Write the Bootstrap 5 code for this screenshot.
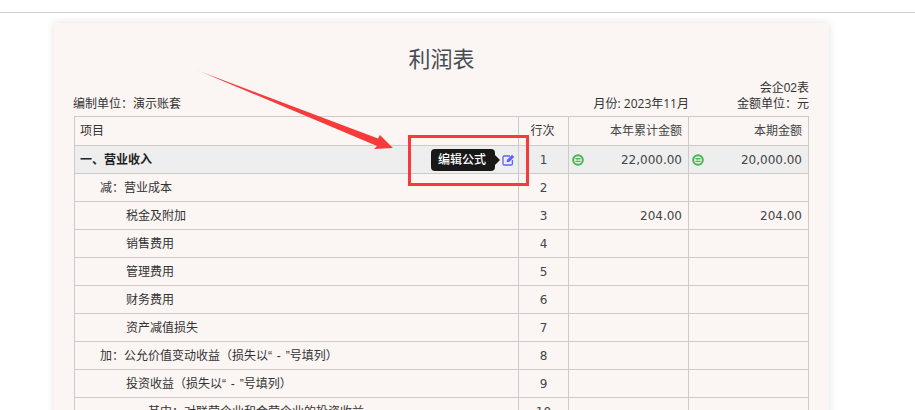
<!DOCTYPE html>
<html lang="zh">
<head>
<meta charset="utf-8">
<title>利润表</title>
<link href="https://cdn.jsdelivr.net/npm/bootstrap@5.3.0/dist/css/bootstrap.min.css" rel="stylesheet">
<style>
html,body{height:410px;overflow:hidden;background:#fff}
body{font-family:"Liberation Sans","Noto Sans CJK SC",sans-serif;font-size:12px;color:#333;position:relative}
.topbar{height:13px;border-bottom:1px solid #d0d0d0}
.sheet{width:775px;height:500px;margin:10px 0 0 54px;background:#fbf6f4;box-shadow:0 0 8px rgba(0,0,0,.12);padding:20px 20px 0 20px}
.sheet-title{font-size:22px;line-height:34px;color:#464c54;text-align:center;margin:0 0 3px;font-weight:400}
.meta{height:37px;margin-bottom:-1px;line-height:16px;color:#333}
.meta-left{width:518px;align-self:flex-end;padding-bottom:5px;margin-left:-1px}
.meta-mid{width:98px;align-self:flex-end;text-align:right;padding-bottom:5px;font-family:"Open Sans","Noto Sans CJK SC",sans-serif;white-space:nowrap}
.meta-right{flex:1;text-align:right;padding-bottom:5px;align-self:flex-end}
.report{table-layout:fixed;width:735px;border-collapse:collapse;color:#333}
.report td{border:1px solid #cdcaca;height:28px;padding:0 5px;vertical-align:middle;white-space:nowrap;overflow:visible;line-height:16px}
.report tr.head td{height:29px}
.report tr.hot td{background:#eeeeee}
.lvl1{font-weight:700;color:#222}
.report td.lvl2{padding-left:25px;word-spacing:1.5px}
.report td.lvl3{padding-left:51px;word-spacing:1.5px}
.report td.lvl4{padding-left:73px}
.num{text-align:right;font-family:"DejaVu Sans",sans-serif;font-size:12px;color:#444}
.line{text-align:center;font-family:"DejaVu Sans","Noto Sans CJK SC",sans-serif;color:#444}
.report td.hd-r{text-align:right;color:#444;padding-right:6px}
.report td.num{padding-right:6px}
.report td.hd-c{padding-right:7px;text-align:center}
.amt{display:flex;align-items:center;justify-content:space-between}
.report td.pad-l{padding-left:3px}
.cell-wrap{display:flex;align-items:center;justify-content:space-between}
.tip{background:#181818;color:#fff;font-size:12px;line-height:22px;height:22px;padding:0 9px 0 7px;border-radius:4px;position:relative;font-weight:500;margin-right:7px}
.tip::after{content:"";position:absolute;left:100%;top:6px;border:5px solid transparent;border-left-color:#181818;border-right-width:0}
.tool{display:flex;align-items:center;margin-right:-2px}
.mark-box{position:absolute;left:408px;top:135px;width:121px;height:51px;border:3px solid #f73b3b;pointer-events:none}
.arrow{position:absolute;left:0;top:0;pointer-events:none}
</style>
</head>
<body>
<div class="topbar"></div>
<div class="sheet">
  <h1 class="sheet-title">利润表</h1>
  <div class="meta d-flex">
    <div class="meta-left">编制单位：演示账套</div>
    <div class="meta-mid">月份: 2023年11月</div>
    <div class="meta-right">会企02表<br>金额单位：元</div>
  </div>
  <table class="report">
    <colgroup><col style="width:444px"><col style="width:50px"><col style="width:120px"><col style="width:120px"></colgroup>
    <tr class="head"><td>项目</td><td class="hd-c">行次</td><td class="hd-r">本年累计金额</td><td class="hd-r">本期金额</td></tr>
    <tr class="hot">
      <td class="lvl1"><div class="cell-wrap"><span>一、营业收入</span><span class="tool"><span class="tip">编辑公式</span>
        <svg width="13" height="12" viewBox="0 0 13 12" fill="none"><path d="M8 2H2.2A1.2 1.2 0 0 0 1 3.2v6.6A1.2 1.2 0 0 0 2.2 11h7a1.2 1.2 0 0 0 1.2-1.2V6" stroke="#6062f4" stroke-width="1.3"/><path d="M4.6 8.2 5 5.8 10 .8l2.2 2.2-5 5z" fill="#6062f4"/></svg></span></div></td>
      <td class="line">1</td>
      <td class="num pad-l"><div class="amt"><svg width="12" height="12" viewBox="0 0 12 12" fill="none"><circle cx="6" cy="6" r="4.8" stroke="#45b54f" stroke-width="2"/><path d="M3.5 4.7h5M3.5 7.4h5" stroke="#45b54f" stroke-width="1.4"/></svg><span>22,000.00</span></div></td>
      <td class="num pad-l"><div class="amt"><svg width="12" height="12" viewBox="0 0 12 12" fill="none"><circle cx="6" cy="6" r="4.8" stroke="#45b54f" stroke-width="2"/><path d="M3.5 4.7h5M3.5 7.4h5" stroke="#45b54f" stroke-width="1.4"/></svg><span>20,000.00</span></div></td>
    </tr>
    <tr><td class="lvl2">减：营业成本</td><td class="line">2</td><td></td><td></td></tr>
    <tr><td class="lvl3">税金及附加</td><td class="line">3</td><td class="num">204.00</td><td class="num">204.00</td></tr>
    <tr><td class="lvl3">销售费用</td><td class="line">4</td><td></td><td></td></tr>
    <tr><td class="lvl3">管理费用</td><td class="line">5</td><td></td><td></td></tr>
    <tr><td class="lvl3">财务费用</td><td class="line">6</td><td></td><td></td></tr>
    <tr><td class="lvl3">资产减值损失</td><td class="line">7</td><td></td><td></td></tr>
    <tr><td class="lvl2">加：公允价值变动收益（损失以“ - ”号填列）</td><td class="line">8</td><td></td><td></td></tr>
    <tr><td class="lvl3">投资收益（损失以“ - ”号填列）</td><td class="line">9</td><td></td><td></td></tr>
    <tr><td class="lvl4">其中：对联营企业和合营企业的投资收益</td><td class="line">10</td><td></td><td></td></tr>
  </table>
</div>
<svg class="arrow" width="915" height="410" viewBox="0 0 915 410"><polygon points="198,70.5 199,71 378,138.5 380,135 393,148 374,149 377,146" fill="#f73b3b"/></svg>
<div class="mark-box"></div>
<script src="https://cdn.jsdelivr.net/npm/bootstrap@5.3.0/dist/js/bootstrap.bundle.min.js"></script>
</body>
</html>
